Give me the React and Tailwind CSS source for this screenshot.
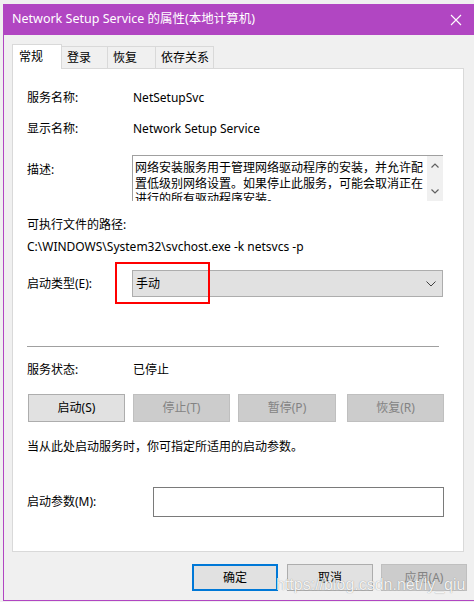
const font = { fontFamily: '"Noto Sans", "Noto Sans CJK SC", sans-serif' };

const Button = ({ children, disabled, className = "" }) => (
  <div
    className={`flex items-center justify-center border text-[12px] ${
      disabled ? "bg-[#cccccc] border-[#bfbfbf] text-[#838383]" : "bg-[#e1e1e1] border-[#adadad] text-black"
    } ${className}`}
  >
    {children}
  </div>
);

const Tab = ({ children, active, className = "" }) =>
  active ? (
    <div className={`relative z-10 -mb-px h-[25px] bg-white border border-b-0 border-[#d9d9d9] pl-[6px] pt-[3px] text-[12px] ${className}`}>
      {children}
    </div>
  ) : (
    <div className={`h-[22px] bg-[#f0f0f0] border border-b-0 border-l-0 border-[#d9d9d9] pl-[5px] pt-[2px] text-[12px] ${className}`}>
      {children}
    </div>
  );

const App = () => (
  <div className="relative w-[474px] h-[602px] bg-[#f0f0f0] overflow-hidden pt-[4px] pl-[3px]" style={font}>
    <div className="w-[471px] h-[597px] border-l border-b border-[#b146c2] bg-[#f0f0f0] flex flex-col">
      {/* title bar */}
      <div className="h-[31px] bg-[#b146c2] flex items-center justify-between pl-[8px] pr-[10px] text-white">
        <span className="text-[12.5px]">Network Setup Service 的属性(本地计算机)</span>
        <svg width="12" height="12" viewBox="0 0 12 12" className="mr-[2px]">
          <path d="M1 1L11 11M11 1L1 11" stroke="white" strokeWidth="1.1" />
        </svg>
      </div>

      {/* tabs */}
      <div className="mt-[9px] ml-[8px] flex items-end">
        <Tab active className="w-[50px]">常规</Tab>
        <Tab className="w-[46px]">登录</Tab>
        <Tab className="w-[48px]">恢复</Tab>
        <Tab className="w-[58px]">依存关系</Tab>
      </div>

      {/* panel */}
      <div className="ml-[8px] w-[452px] h-[484px] bg-white border border-[#d9d9d9] flex flex-col pl-[14px] text-[12px] text-black">
        <div className="mt-[21px] h-[16px] flex items-center">
          <span className="w-[106px]">服务名称:</span>
          <span>NetSetupSvc</span>
        </div>
        <div className="mt-[15px] h-[16px] flex items-center">
          <span className="w-[106px]">显示名称:</span>
          <span>Network Setup Service</span>
        </div>
        <div className="mt-[18px] flex items-start">
          <span className="w-[105px] mt-[6px]">描述:</span>
          <div className="w-[311px] h-[46px] border-t border-l border-[#a0a0a0] flex overflow-hidden">
            <div className="flex-1 pl-[2px] pt-[4px] leading-[15.5px] overflow-hidden">
              网络安装服务用于管理网络驱动程序的安装，并允许配置低级别网络设置。如果停止此服务，可能会取消正在进行的所有驱动程序安装。
            </div>
            <div className="w-[16px] bg-[#f0f0f0] flex flex-col items-center justify-between py-[7px]">
              <svg width="8" height="5" viewBox="0 0 8 5">
                <path d="M0.5 4.5L4 1L7.5 4.5" fill="none" stroke="#606060" strokeWidth="1.2" />
              </svg>
              <svg width="8" height="5" viewBox="0 0 8 5">
                <path d="M0.5 0.5L4 4L7.5 0.5" fill="none" stroke="#606060" strokeWidth="1.2" />
              </svg>
            </div>
          </div>
        </div>
        <div className="mt-[16px] h-[16px] flex items-center">可执行文件的路径:</div>
        <div className="mt-[6px] h-[16px] flex items-center">C:\WINDOWS\System32\svchost.exe -k netsvcs -p</div>
        <div className="mt-[15px] flex items-center">
          <span className="w-[105px]">启动类型(E):</span>
          <div className="w-[311px] h-[27px] bg-[#e1e1e1] border border-[#adadad] flex items-center justify-between pl-[3px] pr-[6px]">
            <span>手动</span>
            <svg width="10" height="6" viewBox="0 0 10 6">
              <path d="M0.5 0.5L5 5L9.5 0.5" fill="none" stroke="#404040" strokeWidth="1" />
            </svg>
          </div>
        </div>
        <div className="mt-[49px] w-[412px] h-px bg-[#a0a0a0]" />
        <div className="mt-[15px] h-[16px] flex items-center">
          <span className="w-[106px]">服务状态:</span>
          <span>已停止</span>
        </div>
        <div className="mt-[16px] flex h-[28px]">
          <Button className="w-[97px] ml-px">启动(S)</Button>
          <Button disabled className="w-[97px] ml-[8px]">停止(T)</Button>
          <Button disabled className="w-[98px] ml-[8px]">暂停(P)</Button>
          <Button disabled className="w-[97px] ml-[11px]">恢复(R)</Button>
        </div>
        <div className="mt-[17px] h-[16px] flex items-center">当从此处启动服务时，你可指定所适用的启动参数。</div>
        <div className="mt-[32px] flex items-center">
          <span className="w-[126px]">启动参数(M):</span>
          <div className="w-[291px] h-[30px] bg-white border border-[#7a7a7a]" />
        </div>
      </div>

      {/* dialog buttons */}
      <div className="mt-[12px] flex justify-end pr-[7px] h-[27px] text-[12px]">
        <div className="w-[86px] flex items-center justify-center bg-[#e1e1e1] border-2 border-[#0078d7]">确定</div>
        <Button className="w-[86px] ml-[9px]">取消</Button>
        <Button disabled className="w-[86px] ml-[8px]">应用(A)</Button>
      </div>
    </div>

    {/* red annotation box */}
    <div className="absolute left-[115px] top-[262px] w-[95px] h-[42px] border-2 border-[#ff0000]" />

    {/* watermark */}
    <div
      className="absolute left-[276px] top-[576px] text-[16px] leading-[18px] text-white/90 [text-shadow:0_0_1px_rgba(0,0,0,0.45)]"
      style={{ fontFamily: '"Liberation Sans", sans-serif' }}
    >
      https://blog.csdn.net/ly_qiu
    </div>
  </div>
);

export default App;
